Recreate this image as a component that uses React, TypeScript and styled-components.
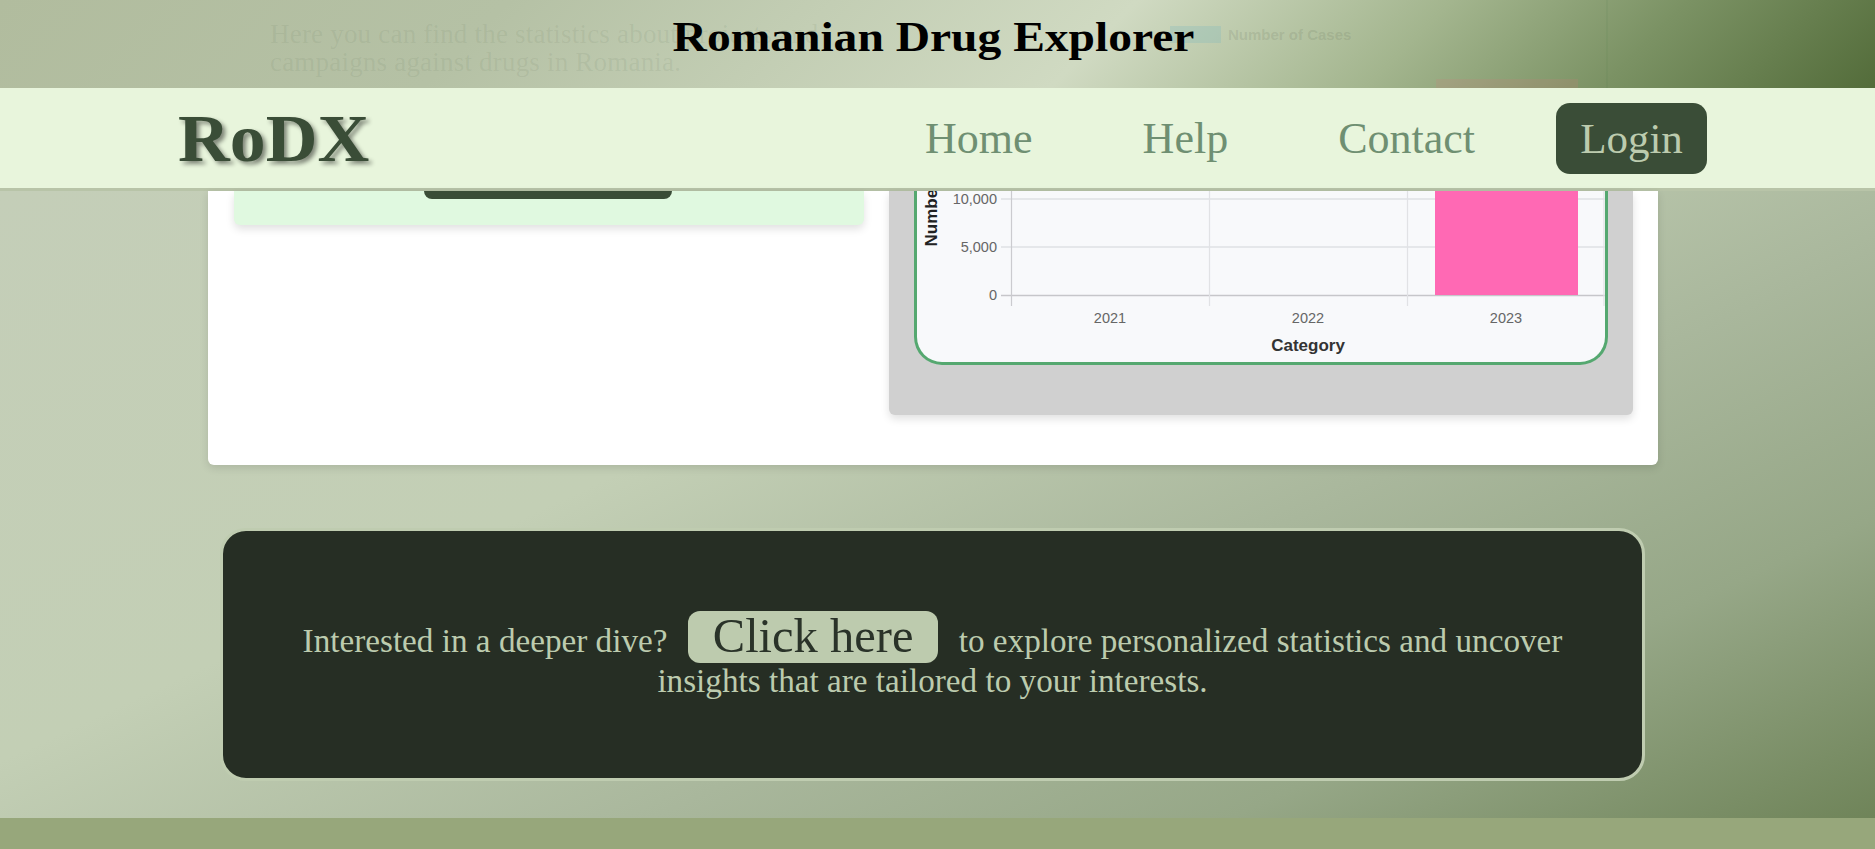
import React from "react";
import styled, { createGlobalStyle } from "styled-components";

const serif = `"Liberation Serif", "Times New Roman", serif`;
const sans = `"Liberation Sans", Arial, sans-serif`;

const GlobalStyle = createGlobalStyle`
  html, body {
    margin: 0;
    padding: 0;
    height: 100%;
    overflow: hidden;
    font-family: ${serif};
  }
`;

const navLinks = ["Home", "Help", "Contact"];

const CasesChart: React.FC = () => {
  const hLines = [8, 56, 104.5];
  const vLines = [93.5, 291.5, 489.5, 686];
  const yLabels = [
    { y: 13, text: "10,000" },
    { y: 61, text: "5,000" },
    { y: 109, text: "0" },
  ];
  const years = [
    { x: 192, text: "2021" },
    { x: 390, text: "2022" },
    { x: 588, text: "2023" },
  ];

  return (
    <ChartSvg viewBox="-1 0 688 171">
      {hLines.map((y) => (
        <line key={y} x1={83} x2={687} y1={y} y2={y} stroke={y === 104.5 ? "#c6c6ca" : "#dfe0e4"} strokeWidth={1.3} />
      ))}
      {vLines.map((x) => (
        <line key={x} x1={x} x2={x} y1={0} y2={115} stroke={x === 93.5 ? "#cbcbcf" : "#e1e2e5"} strokeWidth={1.2} />
      ))}
      <rect x={517} y={0} width={143} height={104} fill="#ff69b4" />
      {yLabels.map((l) => (
        <text key={l.text} x={79} y={l.y} textAnchor="end" fontSize={14.5} fill="#666" fontFamily={sans}>
          {l.text}
        </text>
      ))}
      {years.map((l) => (
        <text key={l.text} x={l.x} y={132} textAnchor="middle" fontSize={14.5} fill="#666" fontFamily={sans}>
          {l.text}
        </text>
      ))}
      <text x={390} y={160} textAnchor="middle" fontSize={17} fontWeight={700} fill="#333" fontFamily={sans}>
        Category
      </text>
      <text transform="translate(19 55.5) rotate(-90)" fontSize={17} fontWeight={700} fill="#222" fontFamily={sans}>
        Number of Cases
      </text>
    </ChartSvg>
  );
};

const App: React.FC = () => {
  return (
    <Shell>
      <GlobalStyle />
      <TopStrip>
        <FaintIntro>
          Here you can find the statistics about projects and
          <br />
          campaigns against drugs in Romania.
        </FaintIntro>
        <FaintLegend>
          <LegendSwatch />
          <LegendLabel>Number of Cases</LegendLabel>
        </FaintLegend>
        <GhostBar />
        <GhostEdge />
        <PageTitle>Romanian Drug Explorer</PageTitle>
      </TopStrip>

      <NavBar>
        <Logo>RoDX</Logo>
        <NavLinks>
          {navLinks.map((link) => (
            <NavLink key={link} href="#">
              {link}
            </NavLink>
          ))}
          <LoginButton href="#">Login</LoginButton>
        </NavLinks>
      </NavBar>

      <Main>
        <Panel>
          <GreenCard>
            <CardButton />
          </GreenCard>
          <GreyCard>
            <ChartCard>
              <CasesChart />
            </ChartCard>
          </GreyCard>
        </Panel>

        <CallToAction>
          <CallText>
            Interested in a deeper dive? <ClickHere href="#">Click here</ClickHere> to explore personalized statistics
            and uncover insights that are tailored to your interests.
          </CallText>
        </CallToAction>
      </Main>

      <Footer />
    </Shell>
  );
};

export default App;

const Shell = styled.div`
  width: 1875px;
  height: 849px;
  display: flex;
  flex-direction: column;
  overflow: hidden;
`;

const TopStrip = styled.header`
  position: relative;
  height: 88px;
  flex: none;
  box-sizing: border-box;
  padding: 20px 0 0 270px;
  display: flex;
  overflow: hidden;
  background: linear-gradient(
    135deg,
    #b1bc9e 0%,
    #b5c1a5 26%,
    #d0dac2 58%,
    #a3b58e 74%,
    #7b9264 86%,
    #536c3a 100%
  );
`;

const FaintIntro = styled.p`
  margin: 0;
  width: 900px;
  flex: none;
  font-size: 27px;
  letter-spacing: 0.2px;
  line-height: 28px;
  color: rgba(90, 110, 80, 0.1);
  white-space: nowrap;
`;

const FaintLegend = styled.div`
  display: flex;
  align-items: flex-start;
  gap: 7px;
  padding-top: 6px;
`;

const LegendSwatch = styled.span`
  width: 51px;
  height: 17px;
  background: rgba(130, 185, 190, 0.3);
`;

const LegendLabel = styled.span`
  font-family: ${sans};
  font-size: 15px;
  line-height: 17px;
  font-weight: 700;
  color: rgba(80, 90, 70, 0.15);
`;

const GhostBar = styled.div`
  position: absolute;
  left: 1436px;
  bottom: 0;
  width: 142px;
  height: 9px;
  background: rgba(210, 120, 120, 0.18);
`;

const GhostEdge = styled.div`
  position: absolute;
  left: 1606px;
  top: 0;
  bottom: 0;
  width: 2px;
  background: rgba(70, 110, 60, 0.08);
`;

const PageTitle = styled.h1`
  position: absolute;
  top: 12px;
  left: 0;
  right: 8px;
  margin: 0;
  text-align: center;
  font-size: 43px;
  line-height: 50px;
  font-weight: 700;
  color: #000;
  transform: scaleX(1.105);
`;

const NavBar = styled.nav`
  height: 100px;
  flex: none;
  box-sizing: content-box;
  border-bottom: 3px solid #b8c4a8;
  background: #e8f5dc;
  display: flex;
  align-items: center;
  justify-content: space-between;
  padding: 0 168px 0 178px;
`;

const Logo = styled.div`
  font-size: 68px;
  font-weight: 700;
  line-height: 1;
  color: #3a4d37;
  text-shadow: 3px 3px 4px rgba(0, 0, 0, 0.45);
  transform: scaleX(1.055);
  transform-origin: left center;
`;

const NavLinks = styled.div`
  display: flex;
  align-items: center;
  gap: 110px;
`;

const NavLink = styled.a`
  font-size: 44px;
  color: #6f8f72;
  text-decoration: none;
`;

const LoginButton = styled.a`
  width: 151px;
  height: 71px;
  margin-left: -29px;
  display: flex;
  align-items: center;
  justify-content: center;
  border-radius: 14px;
  background: #3a4d37;
  color: #bccbae;
  font-size: 43px;
  text-decoration: none;
`;

const Main = styled.main`
  flex: 1;
  min-height: 0;
  display: flex;
  flex-direction: column;
  align-items: flex-start;
  background: linear-gradient(155deg, #c4ceb8 0%, #c3cfb5 38%, #a9b79c 62%, #96a787 80%, #6f8459 100%);
`;

const Panel = styled.section`
  width: 1450px;
  height: 274px;
  margin-left: 208px;
  box-sizing: border-box;
  padding: 0 25px 0 26px;
  display: flex;
  align-items: flex-start;
  gap: 25px;
  background: #fff;
  border-radius: 0 0 6px 6px;
  box-shadow: 0 3px 8px rgba(0, 0, 0, 0.12);
`;

const GreenCard = styled.div`
  width: 630px;
  height: 34px;
  display: flex;
  justify-content: center;
  align-items: flex-start;
  background: #e0f9e0;
  border-radius: 0 0 6px 6px;
  box-shadow: 0 4px 8px rgba(0, 0, 0, 0.12);
`;

const CardButton = styled.div`
  width: 248px;
  height: 8px;
  margin-right: 2px;
  background: #3a4d37;
  border-radius: 0 0 10px 10px;
`;

const GreyCard = styled.div`
  width: 744px;
  height: 224px;
  box-sizing: border-box;
  padding: 0 25px;
  background: #d0d0d0;
  border-radius: 0 0 6px 6px;
  box-shadow: 0 4px 8px rgba(0, 0, 0, 0.12);
`;

const ChartCard = styled.div`
  height: 174px;
  box-sizing: border-box;
  border: 3px solid #55a870;
  border-top: none;
  border-radius: 0 0 28px 28px;
  background: #f8f9fb;
  overflow: hidden;
`;

const ChartSvg = styled.svg`
  display: block;
  width: 688px;
  height: 171px;
`;

const CallToAction = styled.section`
  width: 1425px;
  height: 253px;
  margin: 63px 0 0 220px;
  box-sizing: border-box;
  border: 3px solid #bfccb0;
  border-radius: 26px;
  background: #262e24;
  display: flex;
  align-items: center;
  justify-content: center;
  padding: 2px 60px 0;
`;

const CallText = styled.p`
  margin: 0;
  max-width: 1300px;
  text-align: center;
  font-size: 33.2px;
  line-height: 38px;
  color: #bccbae;
`;

const ClickHere = styled.a`
  display: inline-block;
  height: 52px;
  box-sizing: border-box;
  margin: 0 12px -1px;
  padding: 0 25px;
  border-radius: 12px;
  background: #bdcbae;
  color: #2a3329;
  font-size: 48.5px;
  line-height: 50px;
  text-decoration: none;
`;

const Footer = styled.footer`
  height: 31px;
  flex: none;
  background: #97a77b;
`;
